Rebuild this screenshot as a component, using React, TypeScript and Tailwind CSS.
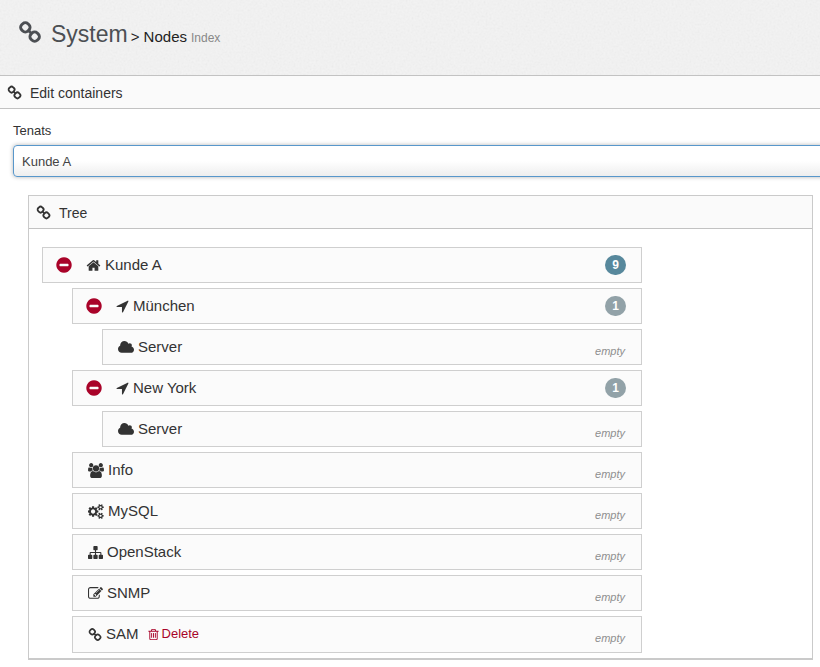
import type { ReactNode } from 'react';

type Glyph = { box: string; d: string };

const GLYPHS = {
  home: {
    box: '0 0 1792 1792',
    d: 'M1472 992v480q0 26-19 45t-45 19h-384v-384h-256v384h-384q-26 0-45-19t-19-45v-480q0-1 .5-3t.5-3l575-474 575 474q1 2 1 6zm223-69l-62 74q-8 9-21 11h-3q-13 0-21-7l-692-577-692 577q-12 8-24 7-13-2-21-11l-62-74q-8-10-7-23.5t11-21.5l719-599q32-26 76-26t76 26l244 204v-195q0-14 9-23t23-9h192q14 0 23 9t9 23v408l219 182q10 8 11 21.5t-7 23.5z',
  },
  arrow: {
    box: '192 64 1408 1664',
    d: 'M1593 349l-640 1280q-17 35-57 35-5 0-15-2-22-5-35.5-22.5t-13.5-39.5v-576h-576q-22 0-39.5-13.5t-22.5-35.5 4-42 29-30l1280-640q13-7 29-7 27 0 45 19 15 14 18.5 34.5t-6.5 39.5z',
  },
  cloud: {
    box: '64 0 1920 1792',
    d: 'M1984 1152q0 159-112.5 271.5t-271.5 112.5h-1088q-185 0-316.5-131.5t-131.5-316.5q0-132 71-241.5t187-163.5q-2-28-2-43 0-212 150-362t362-150q158 0 286.5 88t187.5 230q70-62 166-62 106 0 181 75t75 181q0 75-41 138 129 30 213 134.5t84 239.5z',
  },
  users: {
    box: '0 0 1920 1792',
    d: 'M593 896q-162 5-265 128h-134q-82 0-138-40.5t-56-118.5q0-353 124-353 6 0 43.5 21t97.5 42.5 119 21.5q67 0 133-23-5 37-5 66 0 139 81 256zm1071 637q0 120-73 189.5t-194 69.5h-874q-121 0-194-69.5t-73-189.5q0-53 3.5-103.5t14-109 26.5-108.5 43-97.5 62-81 85.5-53.5 111.5-20q10 0 43 21.5t73 48 107 48 135 21.5 135-21.5 107-48 73-48 43-21.5q61 0 111.5 20t85.5 53.5 62 81 43 97.5 26.5 108.5 14 109 3.5 103.5zm-1024-1277q0 106-75 181t-181 75-181-75-75-181 75-181 181-75 181 75 75 181zm704 384q0 159-112.5 271.5t-271.5 112.5-271.5-112.5-112.5-271.5 112.5-271.5 271.5-112.5 271.5 112.5 112.5 271.5zm576 225q0 78-56 118.5t-138 40.5h-134q-103-123-265-128 81-117 81-256 0-29-5-66 66 23 133 23 59 0 119-21.5t97.5-42.5 43.5-21q124 0 124 353zm-128-609q0 106-75 181t-181 75-181-75-75-181 75-181 181-75 181 75 75 181z',
  },
  cogs: {
    box: '0 0 1856 1792',
    d: 'M832 896q0-106-75-181t-181-75-181 75-75 181 75 181 181 75 181-75 75-181zm768 512q0-52-38-90t-90-38-90 38-38 90q0 53 37.5 90.5t90.5 37.5 90.5-37.5 37.5-90.5zm0-1024q0-52-38-90t-90-38-90 38-38 90q0 53 37.5 90.5t90.5 37.5 90.5-37.5 37.5-90.5zm-384 421v185q0 10-7 19.5t-16 10.5l-155 24q-11 35-32 76 34 48 90 115 7 11 7 20 0 12-7 19-23 30-82.5 89.5t-78.5 59.5q-11 0-21-7l-115-90q-37 19-77 31-11 108-23 155-7 24-30 24h-186q-11 0-20-7.5t-10-17.5l-23-153q-34-10-75-31l-118 89q-7 7-20 7-11 0-21-8-144-133-144-160 0-9 7-19 10-14 41-53t47-61q-23-44-35-82l-152-24q-10-1-17-9.5t-7-19.5v-185q0-10 7-19.5t16-10.5l155-24q11-35 32-76-34-48-90-115-7-11-7-20 0-12 7-20 22-30 82-89t79-59q11 0 21 7l115 90q34-18 77-32 11-108 23-154 7-24 30-24h186q11 0 20 7.5t10 17.5l23 153q34 10 75 31l118-89q8-7 20-7 11 0 21 8 144 133 144 160 0 8-7 19-12 16-42 54t-45 60q23 48 34 82l152 23q10 2 17 10.5t7 19.5zm640 533v140q0 16-149 31-12 27-30 52 51 113 51 138 0 4-4 7-122 71-124 71-8 0-46-47t-52-68q-20 2-30 2t-30-2q-14 21-52 68t-46 47q-2 0-124-71-4-3-4-7 0-25 51-138-18-25-30-52-149-15-149-31v-140q0-16 149-31 13-29 30-52-51-113-51-138 0-4 4-7 4-2 35-20t59-34 30-16q8 0 46 46.5t52 67.5q20-2 30-2t30 2q51-71 92-112l6-2q4 0 124 70 4 3 4 7 0 25-51 138 17 23 30 52 149 15 149 31zm0-1024v140q0 16-149 31-12 27-30 52 51 113 51 138 0 4-4 7-122 71-124 71-8 0-46-47t-52-68q-20 2-30 2t-30-2q-14 21-52 68t-46 47q-2 0-124-71-4-3-4-7 0-25 51-138-18-25-30-52-149-15-149-31v-140q0-16 149-31 13-29 30-52-51-113-51-138 0-4 4-7 4-2 35-20t59-34 30-16q8 0 46 46.5t52 67.5q20-2 30-2t30 2q51-71 92-112l6-2q4 0 124 70 4 3 4 7 0 25-51 138 17 23 30 52 149 15 149 31z',
  },
  sitemap: {
    box: '0 0 1792 1792',
    d: 'M1792 1248v320q0 40-28 68t-68 28h-320q-40 0-68-28t-28-68v-320q0-40 28-68t68-28h96v-192h-512v192h96q40 0 68 28t28 68v320q0 40-28 68t-68 28h-320q-40 0-68-28t-28-68v-320q0-40 28-68t68-28h96v-192h-512v192h96q40 0 68 28t28 68v320q0 40-28 68t-68 28h-320q-40 0-68-28t-28-68v-320q0-40 28-68t68-28h96v-192q0-52 38-90t90-38h512v-192h-96q-40 0-68-28t-28-68v-320q0-40 28-68t68-28h320q40 0 68 28t28 68v320q0 40-28 68t-68 28h-96v192h512q52 0 90 38t38 90v192h96q40 0 68 28t28 68z',
  },
  edit: {
    box: '0 0 1792 1792',
    d: 'M888 1184l116-116-152-152-116 116v56h96v96h56zm440-720q-16-16-33 1l-350 350q-17 17-1 33t33-1l350-350q17-17 1-33zm80 594v190q0 119-84.5 203.5t-203.5 84.5h-832q-119 0-203.5-84.5t-84.5-203.5v-832q0-119 84.5-203.5t203.5-84.5h832q63 0 117 25 15 7 18 23 3 17-9 29l-49 49q-14 14-32 8-23-6-45-6h-832q-66 0-113 47t-47 113v832q0 66 47 113t113 47h832q66 0 113-47t47-113v-126q0-13 9-22l64-64q15-15 35-7t20 29zm-96-738l288 288-672 672h-288v-288zm444 132l-92 92-288-288 92-92q28-28 68-28t68 28l152 152q28 28 28 68t-28 68z',
  },
  minus: {
    box: '0 0 1792 1792',
    d: 'M1344 960v-128q0-26-19-45t-45-19h-768q-26 0-45 19t-19 45v128q0 26 19 45t45 19h768q26 0 45-19t19-45zm320-64q0 209-103 385.5t-279.5 279.5-385.5 103-385.5-103-279.5-279.5-103-385.5 103-385.5 279.5-279.5 385.5-103 385.5 103 279.5 279.5 103 385.5z',
  },
  trash: {
    box: '0 0 1792 1792',
    d: 'M704 736v576q0 14-9 23t-23 9h-64q-14 0-23-9t-9-23v-576q0-14 9-23t23-9h64q14 0 23 9t9 23zm256 0v576q0 14-9 23t-23 9h-64q-14 0-23-9t-9-23v-576q0-14 9-23t23-9h64q14 0 23 9t9 23zm256 0v576q0 14-9 23t-23 9h-64q-14 0-23-9t-9-23v-576q0-14 9-23t23-9h64q14 0 23 9t9 23zm128 724v-948h-896v948q0 22 7 40.5t14.5 27 10.5 8.5h832q3 0 10.5-8.5t14.5-27 7-40.5zm-672-1076h448l-48-117q-7-9-17-11h-317q-10 2-17 11zm928 32v64q0 14-9 23t-23 9h-96v948q0 83-47 143.5t-113 60.5h-832q-66 0-113-58.5t-47-141.5v-952h-96q-14 0-23-9t-9-23v-64q0-14 9-23t23-9h309l70-167q15-37 54-63t79-26h320q40 0 79 26t54 63l70 167h309q14 0 23 9t9 23z',
  },
} satisfies Record<string, Glyph>;

type IconName = keyof typeof GLYPHS | 'link';

function Icon({ name, className }: { name: IconName; className: string }) {
  if (name === 'link') {
    // Two chain rings joined along the diagonal
    return (
      <svg aria-hidden="true" viewBox="0 0 24 24" className={`shrink-0 ${className}`}>
        <g fill="none" stroke="currentColor" strokeWidth="2.9" transform="rotate(45 12 12)">
          <rect x="1" y="7.6" width="8.8" height="8.8" rx="3.6" />
          <rect x="14.2" y="7.6" width="8.8" height="8.8" rx="3.6" />
          <path d="M9.5 12h5" />
        </g>
      </svg>
    );
  }
  const glyph = GLYPHS[name];
  return (
    <svg aria-hidden="true" viewBox={glyph.box} className={`shrink-0 fill-current ${className}`}>
      <path d={glyph.d} />
    </svg>
  );
}

type TreeNode = {
  label: string;
  icon: IconName;
  count?: number;
  root?: boolean;
  deletable?: boolean;
  children?: TreeNode[];
};

const TREE: TreeNode[] = [
  {
    label: 'Kunde A',
    icon: 'home',
    count: 9,
    root: true,
    children: [
      { label: 'München', icon: 'arrow', count: 1, children: [{ label: 'Server', icon: 'cloud' }] },
      { label: 'New York', icon: 'arrow', count: 1, children: [{ label: 'Server', icon: 'cloud' }] },
      { label: 'Info', icon: 'users' },
      { label: 'MySQL', icon: 'cogs' },
      { label: 'OpenStack', icon: 'sitemap' },
      { label: 'SNMP', icon: 'edit' },
      { label: 'SAM', icon: 'link', deletable: true },
    ],
  },
];

const ICON_SIZE: Record<string, string> = {
  home: 'h-[15px] w-[15px]',
  arrow: 'h-[14px] w-[13px]',
  cloud: 'h-[15px] w-4',
  users: 'h-[15px] w-4',
  cogs: 'h-[15px] w-4',
  sitemap: 'h-[15px] w-[15px]',
  edit: 'h-[15px] w-[15px]',
  link: 'h-[15px] w-[14px]',
};

function Node({ node }: { node: TreeNode }) {
  return (
    <li>
      <div
        className={`mb-[5px] flex items-center border border-[#cfcfcf] bg-[#fbfbfb] px-[15px] ${
          node.deletable ? 'h-[37px] pb-px' : 'h-9'
        }`}
      >
        {node.children && (
          <button type="button" aria-label={`Collapse ${node.label}`} className="-ml-[3px] mr-[13px] text-[#a90329]">
            <Icon name="minus" className="block h-[18px] w-[18px]" />
          </button>
        )}
        <Icon name={node.icon} className={ICON_SIZE[node.icon]} />
        <span className="ml-1 text-[15px] leading-5">{node.label}</span>
        {node.deletable && (
          <button type="button" className="ml-2 flex items-center gap-0.5 text-[13px] leading-5 text-[#a90329]">
            <Icon name="trash" className="h-[13px] w-[13px]" />
            Delete
          </button>
        )}
        {node.count !== undefined ? (
          <span
            className={`ml-auto flex h-5 w-[21px] items-center justify-center rounded-[10px] text-xs font-bold text-white ${
              node.root ? 'bg-[#57889c]' : 'bg-[#92a2a8]'
            }`}
          >
            {node.count}
          </span>
        ) : (
          <em className="mt-2 ml-auto pr-px text-[11px] leading-4 text-[#8f8f8f]">empty</em>
        )}
      </div>
      {node.children && (
        <ol className="pl-[30px]">
          {node.children.map((child, i) => (
            <Node key={i} node={child} />
          ))}
        </ol>
      )}
    </li>
  );
}

function PanelHeader({ children }: { children: ReactNode }) {
  return (
    <header className="flex h-[33px] items-center gap-2 border-b border-[#c2c2c2] bg-[#fafafa] pl-[7px]">
      <Icon name="link" className="h-[15px] w-[15px]" />
      <h2 className="pt-0.5 text-sm leading-5">{children}</h2>
    </header>
  );
}

export default function App() {
  return (
    <div className="overflow-x-hidden bg-white font-['Liberation_Sans',Arial,sans-serif] text-[#333]">
      <div className="relative h-[75px] bg-[#f3f3f3]">
        <svg aria-hidden="true" className="absolute inset-0 h-full w-full opacity-10">
          <filter id="grain">
            <feTurbulence type="fractalNoise" baseFrequency="0.5" numOctaves="2" stitchTiles="stitch" />
            <feColorMatrix type="saturate" values="0" />
          </filter>
          <rect width="100%" height="100%" filter="url(#grain)" />
        </svg>
        <h1 className="relative flex items-baseline pt-5 pl-[18px] leading-7 text-[#222]">
          <Icon name="link" className="mr-[9px] h-6 w-6 self-start text-[#4c4f53]" />
          <span className="text-[23px] text-[#4c4f53]">System</span>
          <span className="ml-[3px] text-[15px]">&gt; Nodes</span>
          <span className="ml-1 text-xs text-[#888]">Index</span>
        </h1>
      </div>

      <section className="border-t border-[#c2c2c2]">
        <PanelHeader>Edit containers</PanelHeader>
        <div className="pl-[13px] pt-3">
          <label htmlFor="tenant" className="block text-[13px] leading-5">
            Tenats
          </label>
          <select
            id="tenant"
            defaultValue="a"
            className="mt-1 block h-8 w-[calc(100%+20px)] appearance-none rounded border border-[#5897cb] bg-linear-to-b from-white from-50% to-[#eee] px-2 pt-0.5 text-[13px] text-[#444] shadow-[0_0_4px_rgba(0,0,0,0.3)] outline-none"
          >
            <option value="a">Kunde A</option>
          </select>
        </div>

        <section className="mt-[18px] mr-[7px] ml-7 border border-b-2 border-[#cacaca]">
          <PanelHeader>Tree</PanelHeader>
          <ol className="max-w-[613px] pt-[18px] pl-[13px]">
            {TREE.map((node, i) => (
              <Node key={i} node={node} />
            ))}
          </ol>
        </section>
      </section>
    </div>
  );
}
